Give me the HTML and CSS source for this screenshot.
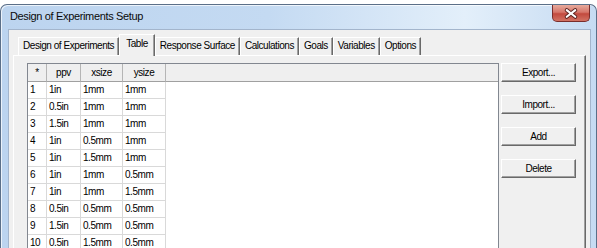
FILE: index.html
```html
<!DOCTYPE html>
<html lang="en">
<head>
<meta charset="UTF-8">
<title>Design of Experiments Setup</title>
<link rel="stylesheet" href="styles.css">
</head>
<body>
<div class="window">
    <div class="titlebar">
        <span class="title">Design of Experiments Setup</span>
        <span class="close">
            <svg width="38" height="16" viewBox="0 0 38 16">
                <path d="M14.5 5 L23.5 12 M23.5 5 L14.5 12" stroke="#5c2420" stroke-width="4.2" stroke-linecap="round"/>
                <path d="M14.5 5 L23.5 12 M23.5 5 L14.5 12" stroke="#fff" stroke-width="2.2" stroke-linecap="round"/>
            </svg>
        </span>
    </div>
    <div class="client">
        <div class="tabs">
            <div class="tab">Design of Experiments</div>
            <div class="tab active">Table</div>
            <div class="tab">Response Surface</div>
            <div class="tab">Calculations</div>
            <div class="tab">Goals</div>
            <div class="tab">Variables</div>
            <div class="tab">Options</div>
        </div>
        <div class="panel">
            <div class="grid">
                <div class="cell head">*</div>
                <div class="cell head">ppv</div>
                <div class="cell head">xsize</div>
                <div class="cell head">ysize</div>
                <div class="cell head last"></div>

                <div class="cell">1</div><div class="cell">1in</div><div class="cell">1mm</div><div class="cell">1mm</div><div class="cell filler"></div>
                <div class="cell">2</div><div class="cell">0.5in</div><div class="cell">1mm</div><div class="cell">1mm</div><div class="cell filler"></div>
                <div class="cell">3</div><div class="cell">1.5in</div><div class="cell">1mm</div><div class="cell">1mm</div><div class="cell filler"></div>
                <div class="cell">4</div><div class="cell">1in</div><div class="cell">0.5mm</div><div class="cell">1mm</div><div class="cell filler"></div>
                <div class="cell">5</div><div class="cell">1in</div><div class="cell">1.5mm</div><div class="cell">1mm</div><div class="cell filler"></div>
                <div class="cell">6</div><div class="cell">1in</div><div class="cell">1mm</div><div class="cell">0.5mm</div><div class="cell filler"></div>
                <div class="cell">7</div><div class="cell">1in</div><div class="cell">1mm</div><div class="cell">1.5mm</div><div class="cell filler"></div>
                <div class="cell">8</div><div class="cell">0.5in</div><div class="cell">0.5mm</div><div class="cell">0.5mm</div><div class="cell filler"></div>
                <div class="cell">9</div><div class="cell">1.5in</div><div class="cell">0.5mm</div><div class="cell">0.5mm</div><div class="cell filler"></div>
                <div class="cell">10</div><div class="cell">0.5in</div><div class="cell">1.5mm</div><div class="cell">0.5mm</div><div class="cell filler"></div>
            </div>
            <div class="buttons">
                <button class="btn">Export...</button>
                <button class="btn">Import...</button>
                <button class="btn">Add</button>
                <button class="btn">Delete</button>
            </div>
        </div>
    </div>
</div>
</body>
</html>
```

FILE: styles.css
```css
body {
    margin: 0;
    width: 597px;
    height: 248px;
    overflow: hidden;
    background-color: #fff;
    font-family: 'Liberation Sans', Arial, sans-serif;
    font-size: 10px;
    letter-spacing: -0.45px;
    color: #000;
}
.window {
    box-sizing: border-box;
    display: flex;
    flex-direction: column;
    width: 597px;
    height: 244px;
    margin-top: 4px;
    padding: 0 5px 0 7px;
    border: 1px solid #5b6f88;
    border-bottom: none;
    border-radius: 7px 7px 0 0;
    background: linear-gradient(to right, #bcd4ef 0%, #c4daf2 45%, #e3effa 78%, #c6dbf2 100%);
    box-shadow: inset 1px 1px 0 rgba(255, 255, 255, 0.7);
}
.titlebar {
    display: flex;
    justify-content: space-between;
    align-items: flex-start;
    height: 24px;
}
.title {
    padding: 5px 0 0 2px;
    font-size: 11px;
    letter-spacing: -0.35px;
    color: #0a0a0a;
}
.close {
    box-sizing: border-box;
    display: flex;
    width: 38px;
    height: 17px;
    margin-right: 1px;
    border: 1px solid #7a2d2b;
    border-top: none;
    border-radius: 0 0 5px 5px;
    background: linear-gradient(#e7aa9c, #d6766a 45%, #c24a3e 55%, #d27263);
}
.client {
    flex: 1;
    display: flex;
    flex-direction: column;
    min-height: 0;
    padding: 4px 4px 0 4px;
    border: 1px solid #a3b5cc;
    border-bottom: none;
    background-color: #f0f0f0;
}
.tabs {
    position: relative;
    z-index: 1;
    display: flex;
    align-items: flex-end;
    height: 21px;
    padding-left: 5px;
}
.tab {
    box-sizing: border-box;
    height: 18px;
    padding: 1px 4px 0 4px;
    line-height: 14px;
    white-space: nowrap;
    border-top: 1px solid #fff;
    border-left: 1px solid #fff;
    border-right: 1px solid #696969;
    box-shadow: inset -1px 0 0 #a0a0a0;
}
.tab.active {
    height: 22px;
    margin-bottom: -1px;
    padding: 2px 6px 0 6px;
    background-color: #f0f0f0;
}
.panel {
    flex: 1;
    display: flex;
    gap: 2px;
    min-height: 0;
    padding: 7px 9px 0 13px;
    border: 1px solid;
    border-bottom: none;
    border-color: #fff #696969 #696969 #fff;
    box-shadow: inset -1px 0 0 #a0a0a0;
    background-color: #f0f0f0;
}
.grid {
    box-sizing: border-box;
    display: grid;
    grid-template-columns: 19px 34px 42px 43px 1fr;
    grid-template-rows: 18px;
    grid-auto-rows: 17px;
    align-content: start;
    width: 472px;
    overflow: hidden;
    border: 1px solid #828790;
    border-bottom: none;
    background-color: #fff;
}
.cell {
    box-sizing: border-box;
    padding-left: 2px;
    line-height: 16px;
    white-space: nowrap;
    overflow: hidden;
    border-right: 1px solid #d9d9d9;
    border-bottom: 1px solid #d9d9d9;
}
.cell.head {
    padding-left: 0;
    line-height: 17px;
    text-align: center;
    background-color: #efefef;
    border-right-color: #b5b5b5;
    border-bottom-color: #a0a0a0;
}
.cell.head.last {
    border-right: none;
}
.cell.filler {
    border: none;
}
.buttons {
    display: flex;
    flex-direction: column;
    gap: 13px;
    width: 75px;
}
.btn {
    box-sizing: border-box;
    height: 19px;
    padding: 0;
    font: inherit;
    letter-spacing: inherit;
    color: #000;
    text-align: center;
    border: 1px solid;
    border-color: #fff #696969 #696969 #fff;
    box-shadow: inset -1px -1px 0 #a0a0a0;
    background-color: #f0f0f0;
}
```
